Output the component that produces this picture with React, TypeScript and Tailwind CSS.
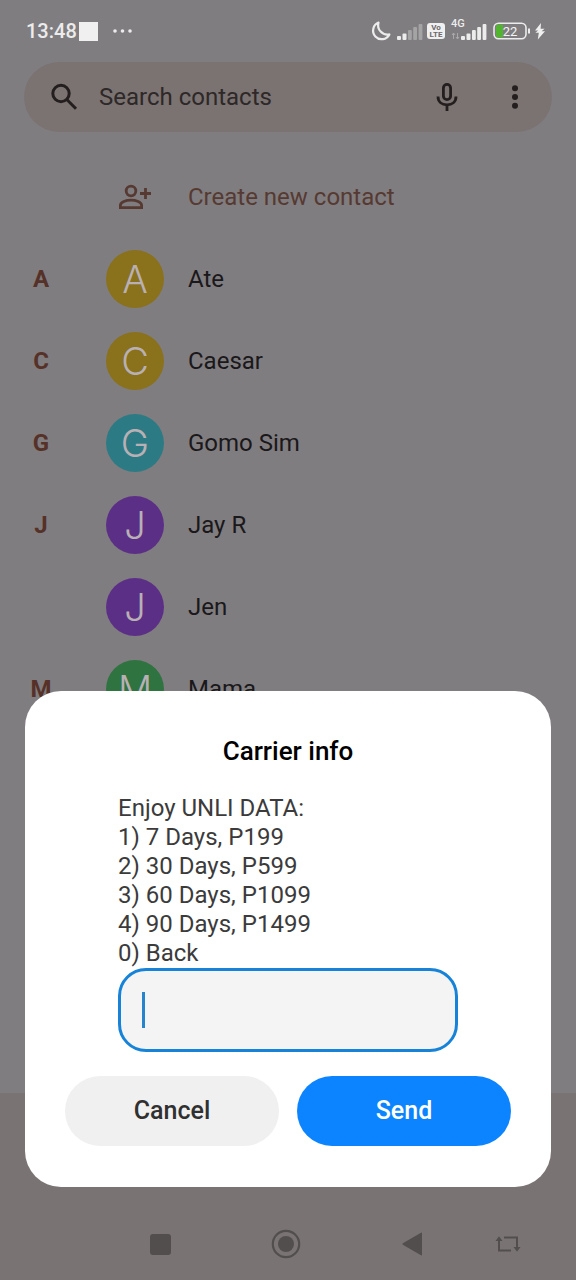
import React from "react";

type Contact = { section: string; initial: string; name: string; color: string };

const contacts: Contact[] = [
  { section: "A", initial: "A", name: "Ate", color: "bg-[#8a711b]" },
  { section: "C", initial: "C", name: "Caesar", color: "bg-[#8a711b]" },
  { section: "G", initial: "G", name: "Gomo Sim", color: "bg-[#2c7b84]" },
  { section: "J", initial: "J", name: "Jay R", color: "bg-[#5c2f86]" },
  { section: "", initial: "J", name: "Jen", color: "bg-[#5c2f86]" },
  { section: "M", initial: "M", name: "Mama", color: "bg-[#2f7340]" },
];

const plans = [
  "Enjoy UNLI DATA:",
  "1) 7 Days, P199",
  "2) 30 Days, P599",
  "3) 60 Days, P1099",
  "4) 90 Days, P1499",
  "0) Back",
];

function SignalBars({ dim }: { dim: boolean }) {
  return (
    <svg width="26" height="18" viewBox="0 0 26 18" fill="#ececec" aria-hidden="true">
      <rect x="0" y="14" width="4" height="4" rx="1" />
      <rect x="5.5" y="11.5" width="4" height="6.5" rx="1" />
      <g opacity={dim ? 0.35 : 1}>
        <rect x="11" y="8" width="3.8" height="10" rx="1" />
        <rect x="16.2" y="5" width="3.8" height="13" rx="1" />
        <rect x="21.6" y="2" width="3.8" height="16" rx="1" />
      </g>
    </svg>
  );
}

function StatusBar() {
  return (
    <header className="flex h-[62px] items-center justify-between pr-[31px] pl-[26px] text-[#ececec]">
      <div className="flex items-center">
        <span className="text-[20px] leading-6 font-medium">13:48</span>
        <span className="ml-0.5 size-[19px] bg-[#f0f0f0]" />
        <svg className="ml-[15px]" width="20" height="6" viewBox="0 0 20 6" fill="#ececec" aria-hidden="true">
          <circle cx="2" cy="3" r="1.8" />
          <circle cx="9.5" cy="3" r="1.8" />
          <circle cx="17" cy="3" r="1.8" />
        </svg>
      </div>
      <div className="flex items-center">
        <svg width="20" height="20" viewBox="0 0 20 20" fill="none" stroke="#ececec" strokeWidth="2.2" strokeLinejoin="round" aria-hidden="true">
          <path d="M7.5 1.6A8.6 8.6 0 1 0 18.4 13.4A9.4 9.4 0 0 1 7.5 1.6Z" />
        </svg>
        <span className="ml-1.5 flex">
          <SignalBars dim />
        </span>
        <span className="ml-1 flex h-4 w-[18px] flex-col items-center justify-center rounded-[3px] bg-[#f0f0f0] text-[8px] leading-[7px] font-bold text-[#6a686a]">
          <span>Vo</span>
          <span>LTE</span>
        </span>
        <span className="relative ml-4 flex">
          <span className="absolute -top-1 -left-2.5 text-[11px] leading-3 font-medium">4G</span>
          <svg className="absolute bottom-0 -left-2.5" width="9" height="8" viewBox="0 0 9 8" fill="none" stroke="#aaa8aa" aria-hidden="true">
            <path d="M2.5 7V1M1 3L2.5 1L4 3M6.5 1V7M5 5L6.5 7L8 5" />
          </svg>
          <SignalBars dim={false} />
        </span>
        <svg className="ml-1.5 overflow-visible" width="38" height="18" viewBox="0 0 38 18" aria-hidden="true">
          <path d="M5 2.5H10V15.5H5Q3 15.5 3 13V5Q3 2.5 5 2.5Z" fill="#52b52e" />
          <rect x="1" y="1.2" width="32" height="15.6" rx="4.5" fill="none" stroke="#ececec" strokeWidth="1.6" />
          <path d="M36 6.5V11.5" stroke="#ececec" strokeWidth="2" />
          <text x="17" y="13.5" textAnchor="middle" fill="#f4f4f4" fontSize="13" fontFamily="Roboto, sans-serif">22</text>
        </svg>
        <svg className="ml-1" width="10" height="17" viewBox="0 0 10 17" fill="#f0f0f0" aria-hidden="true">
          <path d="M6 0L0 7.4H3.2L0.4 9.8H3.8L2.8 16.5L10 8.2H6.6L9.6 5.8H5.6Z" />
        </svg>
      </div>
    </header>
  );
}

function SearchBar() {
  return (
    <div className="mx-6 flex h-[70px] items-center rounded-full bg-[#7a7372] pr-[26px] pl-[26px] text-[#241e1e]">
      <svg width="28" height="28" viewBox="0 0 28 28" fill="none" stroke="currentColor" strokeWidth="3" aria-hidden="true">
        <circle cx="11" cy="10.5" r="8.2" />
        <path d="M16.8 16.5L26 25.7" />
      </svg>
      <input
        type="text"
        aria-label="Search contacts"
        placeholder="Search contacts"
        className="ml-[21px] min-w-0 flex-1 bg-transparent text-[24px] leading-8 outline-none placeholder:text-[#2e2828]"
      />
      <button type="button" aria-label="Voice search" className="flex">
        <svg width="22" height="30" viewBox="0 0 22 30" fill="none" stroke="currentColor" strokeWidth="2.8" aria-hidden="true">
          <rect x="7.4" y="2.4" width="7.2" height="15.2" rx="3.6" />
          <path d="M2 14.5C2 20 6 22.8 11 22.8S20 20 20 14.5M11 22.8V29" />
        </svg>
      </button>
      <button type="button" aria-label="More options" className="ml-[46px] flex">
        <svg width="22" height="26" viewBox="0 0 22 26" fill="currentColor" aria-hidden="true">
          <circle cx="11" cy="4.2" r="3" />
          <circle cx="11" cy="13" r="3" />
          <circle cx="11" cy="21.8" r="3" />
        </svg>
      </button>
    </div>
  );
}

function ContactList() {
  return (
    <main className="mt-6 text-[24px] leading-7">
      <button type="button" className="grid h-[82px] w-full grid-cols-[82px_58px_1fr] items-center gap-x-6 text-left text-[#563a32]">
        <span />
        <svg className="justify-self-center" width="34" height="26" viewBox="0 0 34 26" fill="none" stroke="currentColor" strokeWidth="2.8" aria-hidden="true">
          <circle cx="13" cy="7" r="4.8" />
          <path d="M2.4 23.6V21.2C2.4 18.2 8 16.2 13 16.2S23.6 18.2 23.6 21.2V23.6Z" />
          <path d="M27.5 4V15M22 9.5H33" />
        </svg>
        <span>Create new contact</span>
      </button>
      <ul>
        {contacts.map((c) => (
          <li key={c.name} className="grid h-[82px] grid-cols-[82px_58px_1fr] items-center gap-x-6 text-[#1a181a]">
            <span className="text-center font-bold text-[#553128]">{c.section}</span>
            <span className={`flex size-[58px] items-center justify-center rounded-full font-['Inter',sans-serif] text-[38px] leading-none font-light text-[#b9b0b5] ${c.color}`}>
              {c.initial}
            </span>
            <span>{c.name}</span>
          </li>
        ))}
      </ul>
    </main>
  );
}

function SystemNav() {
  return (
    <nav className="mt-auto flex h-[187px] flex-col justify-end bg-[#797473] text-[#524e4e]">
      <div className="grid h-[72px] grid-cols-[97fr_126fr_126fr_125fr_68fr_34fr] items-center justify-items-center">
        <span />
        <button type="button" aria-label="Recent apps">
          <span className="block size-[21px] rounded-[3px] bg-[#524e4e]" />
        </button>
        <button type="button" aria-label="Home">
          <svg width="30" height="30" viewBox="0 0 30 30" aria-hidden="true">
            <circle cx="15" cy="15" r="13.2" fill="none" stroke="currentColor" strokeWidth="2.2" />
            <circle cx="15" cy="15" r="8" fill="currentColor" />
          </svg>
        </button>
        <button type="button" aria-label="Back">
          <svg width="20" height="24" viewBox="0 0 20 24" fill="currentColor" aria-hidden="true">
            <path d="M19 0.8Q20 0.2 20 1.4V22.6Q20 23.8 19 23.2L0.8 12.8Q0 12 0.8 11.2Z" />
          </svg>
        </button>
        <button type="button" aria-label="Rotate screen">
          <svg width="26" height="18" viewBox="0 0 26 18" fill="none" stroke="currentColor" strokeWidth="2" aria-hidden="true">
            <path d="M4 5V15.5H16M9 2.5H22V13" />
            <path d="M0.5 6L4 1.2L7.5 6ZM18.5 12L22 16.8L25.5 12Z" fill="currentColor" stroke="none" />
          </svg>
        </button>
      </div>
    </nav>
  );
}

function CarrierDialog() {
  return (
    <div className="absolute inset-x-0 bottom-[93px] px-[25px]">
      <form
        role="dialog"
        aria-labelledby="dialog-title"
        onSubmit={(e) => e.preventDefault()}
        className="rounded-[36px] bg-white px-10 pt-11 pb-[41px]"
      >
        <h1 id="dialog-title" className="text-center text-[26px] leading-8 font-medium text-black">
          Carrier info
        </h1>
        <div className="mt-[27px] px-[53px]">
          <label htmlFor="reply" className="block text-[24px] leading-[29px] text-[#3b3b3b]">
            {plans.map((line) => (
              <span key={line} className="block">{line}</span>
            ))}
          </label>
          <div className="relative">
            <input
              id="reply"
              type="text"
              className="block h-[84px] w-full rounded-[28px] border-3 border-[#1683d8] bg-[#f4f4f4] px-[22px] text-[24px] text-[#222] caret-transparent outline-none"
            />
            <span className="absolute top-6 left-6 h-9 w-[3px] bg-[#2585cc]" />
          </div>
        </div>
        <div className="mt-6 grid grid-cols-2 gap-[18px] text-[25px] leading-8 font-medium">
          <button type="button" className="h-[70px] rounded-full bg-[#f0f0f0] text-[#303030]">Cancel</button>
          <button type="submit" className="h-[70px] rounded-full bg-[#0d84ff] text-white">Send</button>
        </div>
      </form>
    </div>
  );
}

export default function App() {
  return (
    <div className="relative flex min-h-screen flex-col bg-[#807d80] font-['Roboto',sans-serif]">
      <StatusBar />
      <SearchBar />
      <ContactList />
      <SystemNav />
      <CarrierDialog />
    </div>
  );
}
